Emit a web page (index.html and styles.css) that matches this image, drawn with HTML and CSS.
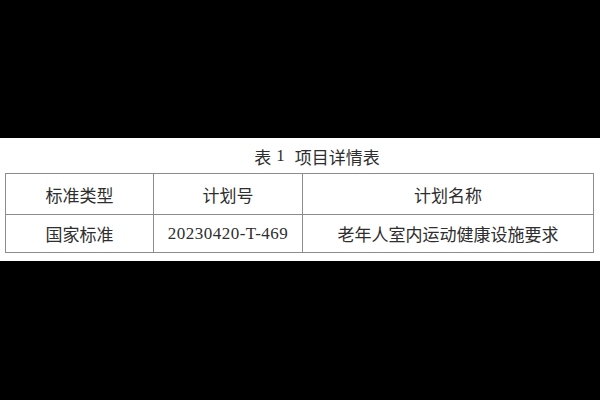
FILE: index.html
```html
<!DOCTYPE html>
<html lang="zh-CN">
<head>
<meta charset="utf-8">
<link rel="stylesheet" href="styles.css">
</head>
<body>
<div class="band">
  <div class="caption"><span>表</span><span class="num">1</span><span>项目详情表</span></div>
  <table class="info">
    <colgroup>
      <col class="c1"><col class="c2"><col class="c3">
    </colgroup>
    <tr class="head">
      <td>标准类型</td>
      <td>计划号</td>
      <td>计划名称</td>
    </tr>
    <tr class="row">
      <td>国家标准</td>
      <td class="code">20230420-T-469</td>
      <td>老年人室内运动健康设施要求</td>
    </tr>
  </table>
</div>
</body>
</html>
```
FILE: styles.css
```css
html, body {
  margin: 0;
  padding: 0;
  background: #000;
  width: 600px;
  height: 400px;
  overflow: hidden;
}
body {
  font-family: "Liberation Serif", "Noto Sans CJK SC", serif;
  color: #2e2e2e;
}
.band {
  margin-top: 138px;
  height: 123px;
  background: #fff;
  display: flex;
  flex-direction: column;
  align-items: flex-start;
}
.caption {
  width: 600px;
  height: 35px;
  padding-left: 34px;
  box-sizing: border-box;
  display: flex;
  justify-content: center;
  align-items: center;
  font-size: 17px;
  padding-top: 1px;
}
.caption .num {
  margin: 0 10px 0 5px;
}
.info {
  margin-left: 5px;
  width: 589px;
  border-collapse: collapse;
  table-layout: fixed;
  font-size: 17px;
}
.c1 { width: 148px; }
.c2 { width: 149px; }
.info td {
  border: 1.5px solid #8c8c8c;
  text-align: center;
  padding: 0;
}
.info .code { letter-spacing: 0.5px; }
.head td { height: 40px; }
.row td { height: 37px; }
```
